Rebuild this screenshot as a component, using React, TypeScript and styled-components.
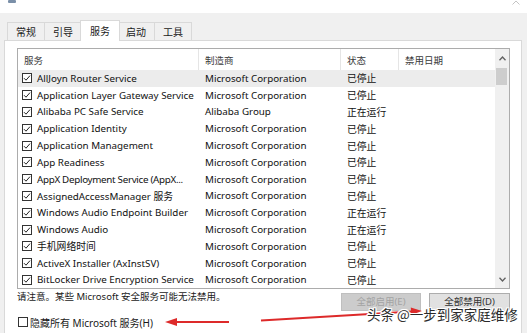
import React from 'react';
import styled, { createGlobalStyle } from 'styled-components';

const GlobalStyle = createGlobalStyle`
  html, body { margin: 0; padding: 0; background: #ffffff; }
  body {
    font-family: "Noto Sans", "Noto Sans CJK SC", sans-serif;
    font-size: 9.8px;
    color: #111;
  }
  #root { width: 527px; height: 333px; overflow: hidden; }
`;

const Window = styled.div`
  position: relative;
  width: 527px;
  height: 333px;
  overflow: hidden;
  display: flex;
  flex-direction: column;
  background: #f0f0f0;
`;

const TitleStrip = styled.div`
  flex: none;
  height: 13px;
  background: #ffffff;
  display: flex;
  justify-content: space-between;
  align-items: flex-start;
  padding: 0 7px 0 8px;
`;

const TabStrip = styled.div`
  flex: none;
  height: 27px;
  display: flex;
  align-items: flex-end;
  padding-left: 7px;
`;

const Tab = styled.div<{ $active?: boolean }>`
  position: relative;
  z-index: ${(p) => (p.$active ? 3 : 1)};
  box-sizing: border-box;
  height: ${(p) => (p.$active ? '21px' : '18px')};
  margin: ${(p) => (p.$active ? '0 -2px -1px -2px' : '0 0 0 -1px')};
  padding: ${(p) => (p.$active ? '0 9px' : '0 8px')};
  border: 1px solid #d9d9d9;
  border-bottom: none;
  background: ${(p) => (p.$active ? '#ffffff' : '#f0f0f0')};
  font-family: "Noto Sans CJK SC", sans-serif;
  font-size: 10px;
  line-height: ${(p) => (p.$active ? '19px' : '17px')};
  color: #1a1a1a;
  &:first-child { margin-left: 0; }
`;

const Panel = styled.div`
  position: relative;
  z-index: 2;
  flex: 1;
  display: flex;
  flex-direction: column;
  background: #ffffff;
  border: 1px solid #d9d9d9;
  border-bottom: none;
  margin: 0 5px 0 4px;
  padding: 7px 11px 0 12px;
`;

const ListBox = styled.div`
  display: flex;
  border: 1px solid #acacac;
  background: #ffffff;
`;

const ListBody = styled.div`
  flex: 1;
  display: flex;
  flex-direction: column;
`;

const COLS = '181px 142px 58px 1fr';

const HeaderRow = styled.div`
  display: grid;
  grid-template-columns: ${COLS};
  height: 21px;
`;

const HeaderCell = styled.div`
  display: flex;
  align-items: center;
  padding-left: 6px;
  border-right: 1px solid #e5e5e5;
  font-family: "Noto Sans CJK SC", sans-serif;
  font-size: 9.5px;
  color: #3a3a3a;
  &:last-child { border-right: none; }
`;

const Row = styled.div<{ $selected?: boolean }>`
  display: grid;
  grid-template-columns: ${COLS};
  height: 16.8px;
  align-items: center;
  background: ${(p) => (p.$selected ? '#ececec' : 'transparent')};
`;

const Cell = styled.div`
  display: flex;
  align-items: center;
  min-width: 0;
  padding-left: 6px;
  white-space: nowrap;
  overflow: hidden;
`;

const NameCell = styled(Cell)`
  padding-left: 4px;
  gap: 5px;
`;

const Label = styled.span<{ $squeeze?: boolean }>`
  white-space: nowrap;
  letter-spacing: ${(p) => (p.$squeeze ? '-0.3px' : 'normal')};
`;

const Box = styled.span`
  flex: none;
  box-sizing: border-box;
  width: 10px;
  height: 10px;
  border: 1px solid #333;
  background: #fff;
  display: inline-flex;
  align-items: center;
  justify-content: center;
`;

const ScrollBar = styled.div`
  flex: none;
  width: 14px;
  display: flex;
  flex-direction: column;
  background: #f0f0f0;
`;

const ScrollBtn = styled.div<{ $h: number }>`
  flex: none;
  height: ${(p) => p.$h}px;
  display: flex;
  align-items: center;
  justify-content: center;
  background: #f0f0f0;
`;

const Thumb = styled.div`
  flex: none;
  height: 17px;
  margin: 0 2px 0 1px;
  background: #cdcdcd;
`;

const Track = styled.div`
  flex: 1;
`;

const BottomRow = styled.div`
  display: flex;
  justify-content: space-between;
  align-items: flex-start;
`;

const Note = styled.div`
  font-size: 9.5px;
  line-height: 16px;
  color: #1a1a1a;
`;

const Buttons = styled.div`
  display: flex;
  gap: 8px;
  margin-top: 4px;
`;

const Button = styled.div<{ $disabled?: boolean }>`
  box-sizing: border-box;
  height: 18px;
  width: ${(p) => (p.$disabled ? '80px' : '81px')};
  display: flex;
  align-items: flex-start;
  justify-content: center;
  padding-top: 3px;
  border: 1px solid ${(p) => (p.$disabled ? '#bfbfbf' : '#adadad')};
  background: ${(p) => (p.$disabled ? '#cccccc' : '#e1e1e1')};
  color: ${(p) => (p.$disabled ? '#a3a3a3' : '#333')};
  font-size: 9.5px;
  line-height: 10px;
`;

const HideRow = styled.div`
  display: flex;
  align-items: center;
  gap: 2px;
  margin-top: 4px;
  padding-left: 1px;
  height: 14px;
  font-size: 10px;
  color: #1a1a1a;
`;

const Watermark = styled.div`
  position: absolute;
  left: 367px;
  top: 308px;
  z-index: 6;
  font-family: "Noto Sans CJK SC", sans-serif;
  font-size: 13.5px;
  line-height: 13px;
  color: #2a2a2a;
  white-space: nowrap;
  text-shadow: 1px 0 0 #fff, -1px 0 0 #fff, 0 1px 0 #fff, 0 -1px 0 #fff,
    1px 1px 0 #fff, -1px -1px 0 #fff, 1px -1px 0 #fff, -1px 1px 0 #fff;
`;

const Overlay = styled.svg`
  position: absolute;
  left: 0;
  top: 0;
  z-index: 5;
  pointer-events: none;
`;

const Check = () => (
  <svg width="8" height="8" viewBox="0 0 8 8">
    <path d="M1 4.2 L3 6.2 L7 1.6" fill="none" stroke="#222" strokeWidth="1" />
  </svg>
);

const Chevron = ({ up }: { up?: boolean }) => (
  <svg width="7" height="5" viewBox="0 0 7 5">
    <path
      d={up ? 'M0.5 4.2 L3.5 1 L6.5 4.2' : 'M0.5 0.8 L3.5 4 L6.5 0.8'}
      fill="none"
      stroke="#606060"
      strokeWidth="1.3"
    />
  </svg>
);

type Svc = { name: string; maker: string; status: string; squeeze?: boolean };

const services: Svc[] = [
  { name: 'AllJoyn Router Service', maker: 'Microsoft Corporation', status: '已停止' },
  { name: 'Application Layer Gateway Service', maker: 'Microsoft Corporation', status: '已停止' },
  { name: 'Alibaba PC Safe Service', maker: 'Alibaba Group', status: '正在运行' },
  { name: 'Application Identity', maker: 'Microsoft Corporation', status: '已停止' },
  { name: 'Application Management', maker: 'Microsoft Corporation', status: '已停止' },
  { name: 'App Readiness', maker: 'Microsoft Corporation', status: '已停止' },
  { name: 'AppX Deployment Service (AppX...', maker: 'Microsoft Corporation', status: '已停止', squeeze: true },
  { name: 'AssignedAccessManager 服务', maker: 'Microsoft Corporation', status: '已停止' },
  { name: 'Windows Audio Endpoint Builder', maker: 'Microsoft Corporation', status: '正在运行' },
  { name: 'Windows Audio', maker: 'Microsoft Corporation', status: '正在运行' },
  { name: '手机网络时间', maker: 'Microsoft Corporation', status: '已停止' },
  { name: 'ActiveX Installer (AxInstSV)', maker: 'Microsoft Corporation', status: '已停止' },
  { name: 'BitLocker Drive Encryption Service', maker: 'Microsoft Corporation', status: '已停止' },
];

const tabs = ['常规', '引导', '服务', '启动', '工具'];

export default function App() {
  return (
    <>
      <GlobalStyle />
      <Window>
        <TitleStrip>
          <svg width="8" height="4" viewBox="0 0 8 4">
            <rect x="0" y="0" width="8" height="3" rx="1" fill="#7a8fa8" />
          </svg>
          <svg width="8" height="5" viewBox="0 0 8 5">
            <path d="M0.5 4.5 L4 1 L7.5 4.5" fill="none" stroke="#c4c4c4" strokeWidth="1" />
          </svg>
        </TitleStrip>
        <TabStrip>
          {tabs.map((t) => (
            <Tab key={t} $active={t === '服务'}>
              {t}
            </Tab>
          ))}
        </TabStrip>
        <Panel>
          <ListBox>
            <ListBody>
              <HeaderRow>
                <HeaderCell>服务</HeaderCell>
                <HeaderCell>制造商</HeaderCell>
                <HeaderCell>状态</HeaderCell>
                <HeaderCell>禁用日期</HeaderCell>
              </HeaderRow>
              {services.map((s, i) => (
                <Row key={s.name} $selected={i === 0}>
                  <NameCell>
                    <Box>
                      <Check />
                    </Box>
                    <Label $squeeze={s.squeeze}>{s.name}</Label>
                  </NameCell>
                  <Cell>{s.maker}</Cell>
                  <Cell>{s.status}</Cell>
                  <Cell />
                </Row>
              ))}
            </ListBody>
            <ScrollBar>
              <ScrollBtn $h={19}>
                <Chevron up />
              </ScrollBtn>
              <Thumb />
              <Track />
              <ScrollBtn $h={18}>
                <Chevron />
              </ScrollBtn>
            </ScrollBar>
          </ListBox>
          <BottomRow>
            <Note>请注意。某些 Microsoft 安全服务可能无法禁用。</Note>
            <Buttons>
              <Button $disabled>全部启用(E)</Button>
              <Button>全部禁用(D)</Button>
            </Buttons>
          </BottomRow>
          <HideRow>
            <Box />
            隐藏所有 Microsoft 服务(H)
          </HideRow>
        </Panel>
        <Overlay width="527" height="333" viewBox="0 0 527 333">
          <line x1="229" y1="322" x2="174" y2="322" stroke="#dd2a2a" strokeWidth="2" />
          <polygon points="165,322 177,318 177,326" fill="#dd2a2a" />
          <line x1="261" y1="320.5" x2="412" y2="311.6" stroke="#dd2a2a" strokeWidth="2" />
          <polygon points="422,311 410.8,307.5 411.2,315" fill="#dd2a2a" />
        </Overlay>
        <Watermark>头条 @一步到家家庭维修</Watermark>
      </Window>
    </>
  );
}
